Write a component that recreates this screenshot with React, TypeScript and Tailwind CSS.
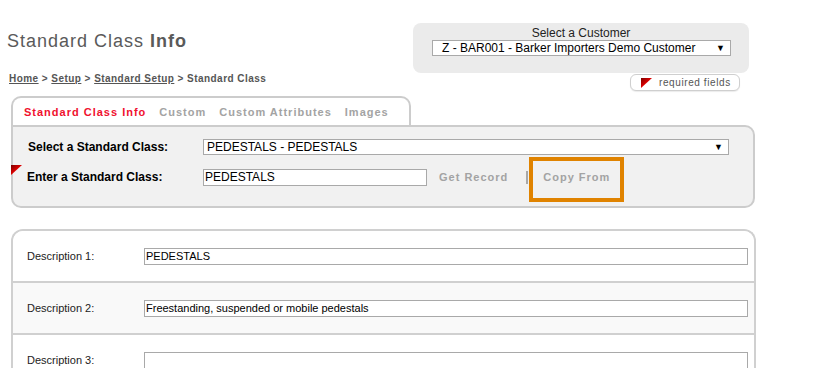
const Triangle = ({ className }: { className?: string }) => (
  <svg width="11" height="10" viewBox="0 0 11 10" className={className}>
    <defs>
      <linearGradient id="rq" x1="0" y1="0" x2="1" y2="1">
        <stop offset="0" stopColor="#7a0000" />
        <stop offset="0.5" stopColor="#e00000" />
        <stop offset="1" stopColor="#ff1a1a" />
      </linearGradient>
    </defs>
    <polygon points="0,10 11,0 0,0" fill="url(#rq)" />
  </svg>
);

const Box = ({ text, width, arrow }: { text: string; width: string; arrow?: boolean }) => (
  <div
    className={`${width} flex h-[16px] items-center justify-between border border-[#a9a9a9] bg-white pl-[2px] pr-[5px] text-[12px] leading-[14px] text-black`}
  >
    <span>{text}</span>
    {arrow && <span className="text-[9px]">▼</span>}
  </div>
);

const descRows = [
  { label: "Description 1:", value: "PEDESTALS", bg: "bg-white h-[50px]" },
  { label: "Description 2:", value: "Freestanding, suspended or mobile pedestals", bg: "bg-[#f9f9f9] h-[52px] border-t-2 border-[#d0d0d0]" },
  { label: "Description 3:", value: "", bg: "bg-white h-[52px] border-t-2 border-[#d0d0d0]" },
];

const App = () => {
  return (
    <div className="h-[368px] w-[820px] overflow-hidden bg-white font-['Liberation_Sans',Arial,sans-serif] text-[#333]">
      {/* header */}
      <div className="flex h-[96px]">
        <div className="w-[413px] pl-[7px]">
          <h1 className="mt-[31px] text-[18px] leading-[21px] tracking-[1px] text-[#5a5a5a]">
            Standard Class <span className="font-bold">Info</span>
          </h1>
          <div className="ml-[2px] mt-[21px] text-[10px] font-bold leading-[12px] tracking-[0.45px] text-[#555]">
            <span className="underline">Home</span> &gt; <span className="underline">Setup</span> &gt;{" "}
            <span className="underline">Standard Setup</span> &gt; Standard Class
          </div>
        </div>
        <div className="w-[336px] pt-[23px]">
          <div className="h-[50px] rounded-[8px] bg-[#ebebeb] pt-[4px]">
            <div className="text-center text-[12px] leading-[13px] text-[#222]">Select a Customer</div>
            <div className="ml-[19px]">
              <Box text="Z - BAR001 - Barker Importers Demo Customer" width="w-[299px] pl-[9px]" arrow />
            </div>
          </div>
          <div className="ml-[217px] mt-[1px] flex h-[17px] w-[110px] items-center rounded-[6px] border border-[#cfcfcf] bg-white pl-[10px] shadow-[0_1px_1px_rgba(0,0,0,0.08)]">
            <Triangle />
            <span className="ml-[7px] text-[10px] leading-[12px] tracking-[0.6px] text-[#555]">required fields</span>
          </div>
        </div>
      </div>

      {/* tabs */}
      <div className="ml-[11px] flex h-[29px] w-[400px] items-center gap-[13px] rounded-t-[10px] border-2 border-b-0 border-[#cccccc] bg-white pl-[11px] pt-[1px] text-[11px] font-bold tracking-[1px] text-[#a3a3a3]">
        <span className="text-[#f0102e]">Standard Class Info</span>
        <span>Custom</span>
        <span>Custom Attributes</span>
        <span>Images</span>
      </div>

      {/* lookup panel */}
      <div className="relative ml-[11px] w-[744px] rounded-b-[10px] rounded-tr-[10px] border-2 border-[#cccccc] bg-[#f1f1f1] pb-[19px] text-[12px] text-black">
        <div className="absolute left-[-2px] top-[38px]">
          <Triangle />
        </div>
        <div className="flex h-[40px] items-center">
          <div className="w-[190px] pl-[15px] font-bold">Select a Standard Class:</div>
          <Box text="PEDESTALS - PEDESTALS" width="w-[526px] pl-[3px]" arrow />
        </div>
        <div className="flex h-[20px] items-center">
          <div className="w-[190px] pl-[14px] font-bold">Enter a Standard Class:</div>
          <div className="flex h-[17px] w-[224px] items-center border border-[#a9a9a9] bg-white pl-[1px] text-[12px]">
            PEDESTALS
          </div>
          <span className="ml-[12px] text-[11px] font-bold tracking-[1px] text-[#a3a3a3]">Get Record</span>
          <div className="ml-[18px] h-[13px] w-[2px] bg-[#a8a8a8]" />
          <span className="relative ml-[15px] flex h-[20px] items-center text-[11px] font-bold tracking-[1px] text-[#a3a3a3]">
            Copy From
            <span className="absolute left-[-14px] top-[-10px] h-[45px] w-[95px] border-4 border-[#e08300]" />
          </span>
        </div>
      </div>

      {/* description panel */}
      <div className="ml-[11px] mt-[21px] w-[745px] overflow-hidden rounded-t-[12px] border-2 border-b-0 border-[#d0d0d0] text-[11px] text-[#222]">
        {descRows.map((row) => (
          <div key={row.label} className={`flex items-center ${row.bg}`}>
            <div className="w-[131px] pl-[14px]">{row.label}</div>
            <div className="flex h-[17px] w-[604px] items-center border border-[#a9a9a9] bg-white pl-[1px] text-[11px] text-black">
              {row.value}
            </div>
          </div>
        ))}
      </div>
    </div>
  );
};

export default App;
